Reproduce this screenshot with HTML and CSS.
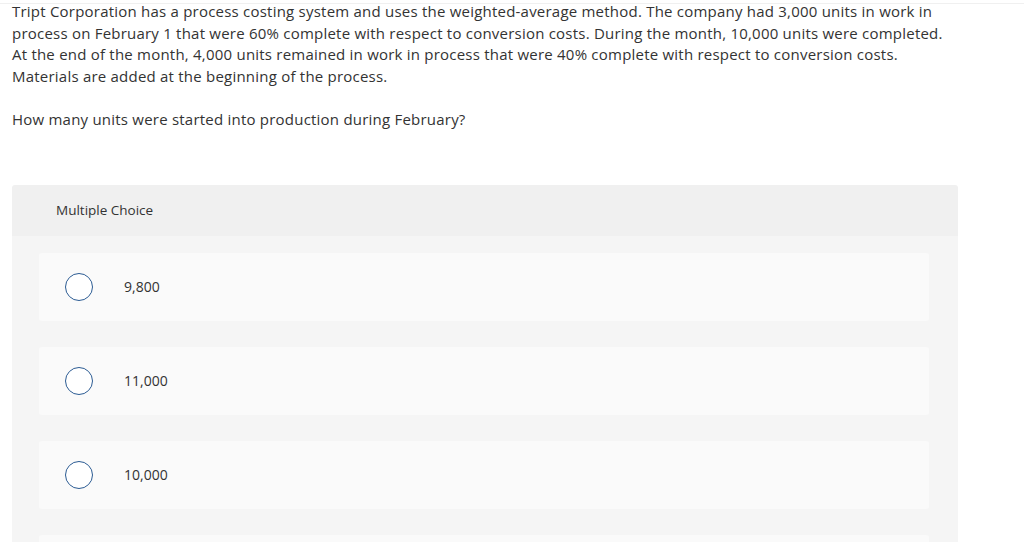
FILE: index.html
```html
<!DOCTYPE html>
<html>
<head>
<meta charset="utf-8">
<link rel="stylesheet" href="styles.css">
</head>
<body>
<div class="page">
  <div class="question">
    <p class="prompt">Tript Corporation has a process costing system and uses the weighted-average method. The company had 3,000 units in work in process on February 1 that were 60% complete with respect to conversion costs. During the month, 10,000 units were completed. At the end of the month, 4,000 units remained in work in process that were 40% complete with respect to conversion costs. Materials are added at the beginning of the process.</p>
    <p class="prompt ask">How many units were started into production during February?</p>
  </div>
  <div class="panel">
    <div class="panel-head">Multiple Choice</div>
    <div class="panel-body">
      <div class="option"><span class="radio"></span><span class="label">9,800</span></div>
      <div class="option"><span class="radio"></span><span class="label">11,000</span></div>
      <div class="option"><span class="radio"></span><span class="label">10,000</span></div>
      <div class="option"></div>
    </div>
  </div>
</div>
</body>
</html>
```
FILE: styles.css
```css
html, body {
  margin: 0;
  padding: 0;
  background: #ffffff;
}
body {
  margin-top: 3px;
  border-top: 1px solid #f0f0f0;
}
.page {
  font-family: "Open Sans", "Liberation Sans", sans-serif;
  color: #333333;
}
.question {
  margin-top: -3px;
  padding: 0 12px;
  width: 940px;
}
.prompt {
  margin: 0;
  font-size: 15px;
  line-height: 21.6px;
  letter-spacing: 0.22px;
}
.ask {
  margin-top: 21.6px;
}
.panel {
  margin: 54px 0 0 12px;
  width: 946px;
  height: 357px;
  overflow: hidden;
  border-radius: 3px 3px 0 0;
  background: #f5f5f5;
}
.panel-head {
  height: 51px;
  background: #f0f0f0;
  border-radius: 3px 3px 0 0;
  display: flex;
  align-items: center;
  padding-left: 44px;
  font-size: 13.5px;
}
.panel-body {
  padding: 17px 29px 20px 27px;
  display: flex;
  flex-direction: column;
  gap: 26px;
}
.option {
  height: 68px;
  flex: none;
  background: #fafafa;
  border-radius: 3px;
  display: flex;
  align-items: center;
  padding-left: 26px;
}
.radio {
  width: 26px;
  height: 26px;
  border: 1.5px solid #2b5b93;
  border-radius: 50%;
  background: #ffffff;
  flex: none;
}
.label {
  margin-left: 31px;
  font-size: 14px;
}
```
